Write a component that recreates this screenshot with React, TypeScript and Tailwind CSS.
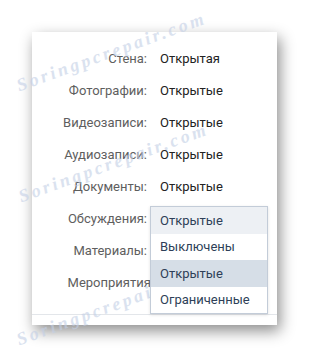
import React from "react";

const rows: [string, string, string][] = [
  ["Стена:", "Открытая", ""],
  ["Фотографии:", "Открытые", ""],
  ["Видеозаписи:", "Открытые", ""],
  ["Аудиозаписи:", "Открытые", ""],
  ["Документы:", "Открытые", ""],
  ["Обсуждения:", "", ""],
  ["Материалы:", "", ""],
  ["Мероприятия:", "", "-mr-[7px]"],
];

const items = [
  { t: "Открытые", bg: "bg-[#edf0f4]" },
  { t: "Выключены", bg: "bg-white" },
  { t: "Открытые", bg: "bg-[#d6dee7]" },
  { t: "Ограниченные", bg: "bg-white" },
];

function Watermark({ className }: { className: string }) {
  return (
    <div
      className={
        "pointer-events-none absolute whitespace-nowrap text-[18px] font-bold italic tracking-[3px] text-[#c3cfe6] opacity-60 [font-family:'Liberation_Serif',serif] " +
        className
      }
      style={{ transform: "rotate(-20deg)", transformOrigin: "left bottom" }}
    >
      Soringpcrepair.com
    </div>
  );
}

export default function App() {
  return (
    <div className="relative h-[358px] w-[309px] overflow-hidden bg-white [font-family:Roboto,sans-serif]">
      <div className="pt-8 pl-8">
        <div className="relative h-[293px] w-[245px] bg-white shadow-[3px_6px_14px_rgba(0,0,0,0.45)]">
          <div className="border-b border-[#e3e6ea] pt-[11px] pb-[15px]">
            {rows.map(([l, v, extra], i) => (
              <div key={i} className="flex h-8 items-center text-[13px]">
                <div className="flex w-[115px] justify-end text-[#5e5e5e]">
                  <span className={"whitespace-nowrap " + extra}>{l}</span>
                </div>
                <div className="pl-[13px] text-[#222]">{v}</div>
              </div>
            ))}
          </div>
          <div className="absolute left-[118px] top-[174px] z-10 w-[118px] border border-[#c3ccd8] bg-white shadow-[0_1px_3px_rgba(0,0,0,0.12)]">
            {items.map((it, i) => (
              <div
                key={i}
                className={"flex h-[26.5px] items-center pl-[9px] text-[13px] text-[#2e3f58] " + it.bg}
              >
                {it.t}
              </div>
            ))}
          </div>
        </div>
      </div>
      <Watermark className="left-[22px] top-[72px]" />
      <Watermark className="left-[24px] top-[183px]" />
      <Watermark className="left-[22px] top-[326px]" />
    </div>
  );
}
